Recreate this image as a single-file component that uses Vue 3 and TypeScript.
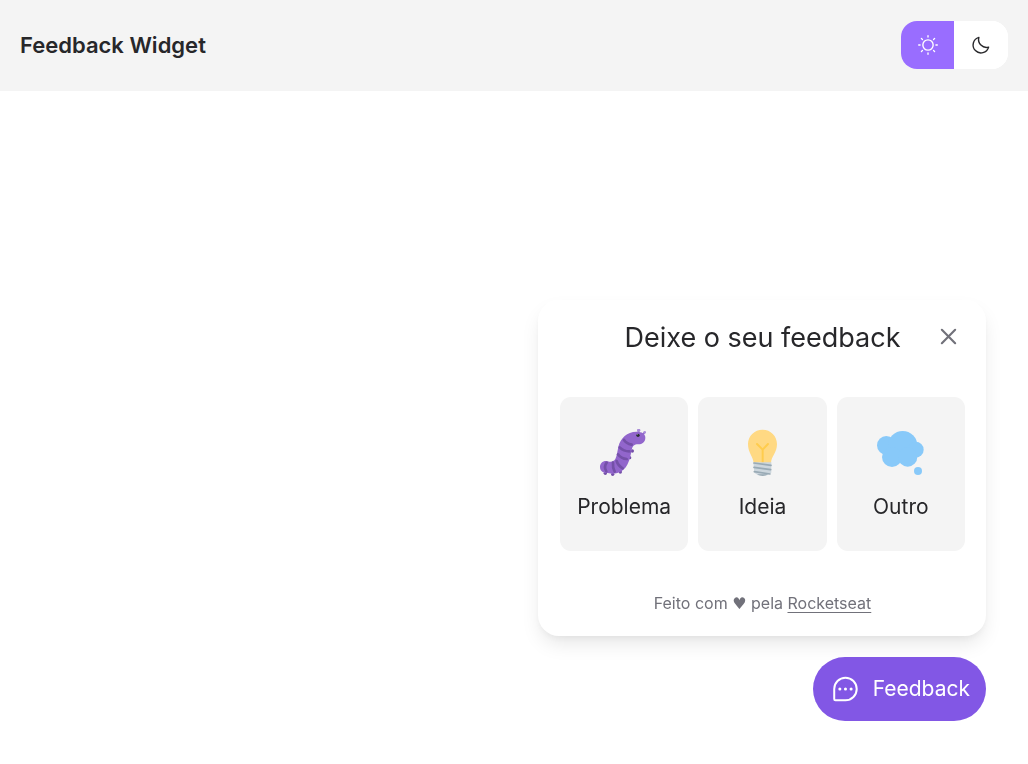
<script setup lang="ts">
import { ref } from 'vue'

type Theme = 'light' | 'dark'
type Kind = 'bug' | 'idea' | 'other'

const theme = ref<Theme>('light')
const open = ref(true)
const options: { kind: Kind; label: string }[] = [
  { kind: 'bug', label: 'Problema' },
  { kind: 'idea', label: 'Ideia' },
  { kind: 'other', label: 'Outro' },
]
</script>

<template>
  <div class="page">
    <header class="topbar">
      <h1 class="brand">Feedback Widget</h1>
      <div class="themes">
        <button type="button" class="theme" :class="{ active: theme === 'light' }" aria-label="Light theme" @click="theme = 'light'">
          <svg viewBox="0 0 256 256" fill="none" stroke="currentColor" stroke-width="16" stroke-linecap="round">
            <circle cx="128" cy="128" r="60" />
            <path d="M128 36V20M63 63 51 51M36 128H20M63 193l-12 12M128 220v16M193 193l12 12M220 128h16M193 63l12-12" />
          </svg>
        </button>
        <button type="button" class="theme" :class="{ active: theme === 'dark' }" aria-label="Dark theme" @click="theme = 'dark'">
          <svg viewBox="0 0 256 256" fill="none" stroke="currentColor" stroke-width="16" stroke-linecap="round" stroke-linejoin="round">
            <path d="M216.700 152.600A91.900 91.900 0 0 1 103.400 39.300a92 92 0 1 0 113.300 113.300Z" />
          </svg>
        </button>
      </div>
    </header>

    <div class="widget">
      <section v-if="open" class="panel" aria-labelledby="panel-title">
        <header class="panel-head">
          <h2 id="panel-title">Deixe o seu feedback</h2>
          <button type="button" class="close" aria-label="Fechar" @click="open = false">
            <svg viewBox="0 0 256 256" fill="none" stroke="currentColor" stroke-width="22" stroke-linecap="round">
              <path d="M196 60 60 196M60 60l136 136" />
            </svg>
          </button>
        </header>

        <div class="options">
          <button v-for="option in options" :key="option.kind" type="button" class="option">
            <svg v-if="option.kind === 'bug'" viewBox="30 27 144 144" aria-hidden="true">
              <g fill="#7450a8">
                <circle cx="46" cy="160" r="5" /><circle cx="68" cy="163" r="5" /><circle cx="91" cy="156" r="5" />
                <circle cx="119" cy="113" r="5" /><circle cx="127" cy="93" r="5" />
              </g>
              <path d="M144 44l2-12M158 44l6-7" fill="none" stroke="#9266cc" stroke-width="5" />
              <circle cx="146" cy="31" r="5" fill="#aa8dd8" /><circle cx="164" cy="37" r="4" fill="#aa8dd8" />
              <path d="M48 123C37 123 30 131 30 141c0 11 8 18 19 18 6 0 11 2 18 2 22 0 38-12 46-29 7-14 9-28 12-42 3-12 8-17 19-17 14 0 22-8 22-20 0-12-10-18-27-18-28 0-47 19-54 45-3 14-4 26-9 37-4 7-11 9-18 8-4-1-7-2-10-2Z" fill="#9266cc" />
              <g fill="none" stroke="#7450a8" stroke-width="8" stroke-linecap="round">
                <path d="M50 128c-6 8-6 18-1 26M69 128c-1 11 1 20 5 27M80 123c3 10 9 17 18 22M84 103c7 9 16 13 26 14M89 82c8 8 18 12 29 12M102 60c5 8 13 12 23 14" />
              </g>
              <circle cx="144" cy="46" r="5" fill="#292f33" /><circle cx="142" cy="44" r="1" fill="#ffffff" />
            </svg>
            <svg v-else-if="option.kind === 'idea'" viewBox="24 27 144 144" aria-hidden="true">
              <path d="M98 29c-25 0-44 19-44 43 0 27 15 36 17 57h52c1-21 18-30 18-57 0-24-19-43-43-43Z" fill="#ffd983" />
              <path d="M81 72l17 17 16-17M98 89v40" fill="none" stroke="#ffcc4d" stroke-width="6" stroke-linecap="round" stroke-linejoin="round" />
              <path d="M70 127h54v31l-13 8H84l-11-8Z" fill="#ccd6dd" />
              <path d="M82 163h31c-3 4-9 5-15 5s-12-1-16-5Z" fill="#99aab5" />
              <path d="M72 129l51 7M72 142l50 7M73 155l47 7" fill="none" stroke="#99aab5" stroke-width="5" stroke-linecap="round" />
            </svg>
            <svg v-else viewBox="27 27 144 144" aria-hidden="true">
              <g fill="#88c9f9">
                <circle cx="55" cy="76" r="28" /><circle cx="104" cy="77" r="44" />
                <circle cx="143" cy="89" r="24" /><circle cx="72" cy="111" r="30" />
                <circle cx="119" cy="111" r="29" /><circle cx="150" cy="153" r="12" />
              </g>
            </svg>
            <span>{{ option.label }}</span>
          </button>
        </div>

        <footer class="credits">
          Feito com <span class="heart">♥</span> pela <a href="https://rocketseat.com.br">Rocketseat</a>
        </footer>
      </section>

      <button type="button" class="launcher" :aria-expanded="open" @click="open = !open">
        <svg viewBox="0 0 256 256" aria-hidden="true">
          <path d="M132 32a92 92 0 0 1 0 192H46a10 10 0 0 1-10-10v-86a96 96 0 0 1 96-96Z" fill="none" stroke="currentColor" stroke-width="17" />
          <g fill="currentColor"><circle cx="84" cy="128" r="13" /><circle cx="132" cy="128" r="13" /><circle cx="180" cy="128" r="13" /></g>
        </svg>
        <span>Feedback</span>
      </button>
    </div>
  </div>
</template>

<style>
body {
  margin: 0;
  background: #ffffff;
}
</style>

<style scoped>
.page {
  min-height: 100vh;
  font-family: Inter, "Liberation Sans", sans-serif;
  color: #27272a;
}
button {
  margin: 0;
  padding: 0;
  border: 0;
  font: inherit;
  color: inherit;
  cursor: pointer;
}
svg {
  display: block;
}
h1,
h2 {
  margin: 0;
}
.topbar {
  display: flex;
  align-items: center;
  justify-content: space-between;
  padding: 21px 20px 22px;
  background: #f4f4f4;
}
.brand {
  font-size: 22px;
  line-height: 32px;
  font-weight: 600;
}
.themes {
  display: flex;
  overflow: hidden;
  border-radius: 16px;
  background: #ffffff;
}
.theme {
  display: flex;
  align-items: center;
  justify-content: center;
  width: 53px;
  height: 48px;
  background: #ffffff;
}
.theme + .theme {
  width: 54px;
}
.theme.active {
  background: #996dff;
  color: #ffffff;
}
.theme svg {
  width: 22px;
  height: 22px;
}
.widget {
  position: fixed;
  right: 42px;
  bottom: 43px;
  display: flex;
  flex-direction: column;
  align-items: flex-end;
  gap: 21px;
}
.panel {
  box-sizing: border-box;
  width: 448px;
  max-width: calc(100vw - 42px);
  padding: 21px 21px 21px 22px;
  border-radius: 21px;
  background: #ffffff;
  box-shadow: 0 10px 20px -3px rgba(0, 0, 0, 0.1), 0 4px 8px -2px rgba(0, 0, 0, 0.05);
}
.panel-head {
  position: relative;
  padding-top: 1px;
  text-align: center;
}
.panel-head h2 {
  font-size: 27px;
  line-height: 32px;
  font-weight: 400;
}
.close {
  position: absolute;
  top: 3px;
  right: 4px;
  background: none;
  color: #71717a;
}
.close svg {
  width: 25px;
  height: 25px;
}
.options {
  display: grid;
  grid-template-columns: repeat(3, 1fr);
  gap: 10px;
  padding: 43px 0 40px;
}
.option {
  display: flex;
  flex-direction: column;
  align-items: center;
  gap: 14px;
  padding: 32px 0 28px;
  border-radius: 11px;
  background: #f4f4f4;
  font-size: 21px;
  line-height: 32px;
}
.option svg {
  width: 48px;
  height: 48px;
}
.credits {
  font-size: 16px;
  line-height: 24px;
  text-align: center;
  color: #71717a;
}
.heart {
  font-family: "DejaVu Sans", sans-serif;
  line-height: 1;
}
.credits a {
  color: inherit;
  text-decoration: underline;
  text-underline-offset: 3px;
}
.launcher {
  display: flex;
  align-items: center;
  gap: 13px;
  height: 64px;
  padding: 0 16px 0 17px;
  border-radius: 32px;
  background: #8257e5;
  color: #ffffff;
  font-size: 21px;
  line-height: 32px;
}
.launcher svg {
  width: 30px;
  height: 30px;
}
</style>
